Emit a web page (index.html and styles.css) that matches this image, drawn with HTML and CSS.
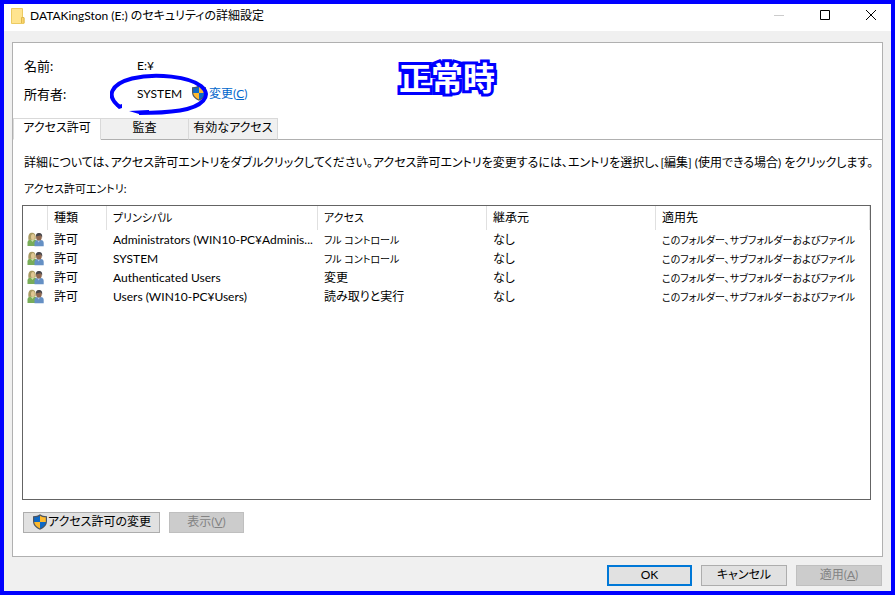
FILE: index.html
```html
<!DOCTYPE html>
<html lang="ja">
<head>
<meta charset="utf-8">
<title>DATAKingSton (E:) のセキュリティの詳細設定</title>
<link rel="stylesheet" href="styles.css">
</head>
<body>
<svg class="defs" aria-hidden="true">
  <symbol id="shield" viewBox="0 0 16 16">
    <path d="M8 .3C6.300 1.600 4 2.200 1 2.200V7c0 4.200 2.800 7 7 8.800 4.200-1.800 7-4.600 7-8.800V2.200C12 2.200 9.700 1.600 8 .3Z" fill="#4c5560"/>
    <path d="M8 1.700C6.300 2.700 4.600 3.200 2.200 3.300V8H8Z" fill="#0e69c6"/>
    <path d="M8 1.700c1.700 1 3.400 1.500 5.800 1.600V8H8Z" fill="#fdb92e"/>
    <path d="M2.200 8H8v6.500C4.700 13 2.500 11 2.200 8Z" fill="#fdb92e"/>
    <path d="M13.800 8H8v6.500c3.300-1.500 5.500-3.500 5.800-6.500Z" fill="#0e69c6"/>
  </symbol>
  <symbol id="users" viewBox="0 0 17 15">
    <path d="M.5 14V10.500C.5 8.500 2 7.500 4 7.500h3c2 0 3 1 3 3V14Z" fill="#79ad58"/>
    <path d="M3.500 7.500 5.500 10l2-2.500Z" fill="#c9dda8"/>
    <path d="M1.500 8C.8 3.500 2 .8 5 .8s4.200 2.400 3.600 6.500Z" fill="#a89a62"/>
    <ellipse cx="5.900" cy="4.900" rx="1.900" ry="2.900" fill="#dfc793"/>
    <path d="M7.500 14.300V11c0-2 1.300-3 3.200-3h3c2 0 3 1.200 3 3v3.300Z" fill="#6590c4"/>
    <path d="m10 8 1.500 2.500L13.600 8Z" fill="#a9c6e8"/>
    <ellipse cx="11.900" cy="4.900" rx="2.900" ry="3.700" fill="#8f6850"/>
    <path d="M8.900 4.500C8.800 2 10 .9 12 .9c2.200 0 3.600 1.300 3.200 4.600L13.800 3.300Z" fill="#45454b"/>
  </symbol>
</svg>
<div class="window">
  <header class="titlebar">
    <svg class="folder" viewBox="0 0 14 16" aria-hidden="true">
      <path d="M.5.500h11V9l1.500 1v5.500H.5Z" fill="#ffe48f" stroke="#eccb62"/>
      <path d="M10.500 15V9.500h2.500V15" fill="#fbd66b" stroke="#dfb84e"/>
    </svg>
    <h1>DATAKingSton (E:) のセキュリティの詳細設定</h1>
    <div class="controls">
      <button aria-label="最小化" disabled><svg viewBox="0 0 10 10"><path d="M0 5.500h10" stroke="#ccc"/></svg></button>
      <button aria-label="最大化"><svg viewBox="0 0 10 10"><path d="M.5.500h9v9h-9Z" fill="none" stroke="#000"/></svg></button>
      <button aria-label="閉じる"><svg viewBox="0 0 10 10"><path d="m0 0 10 10M10 0 0 10" stroke="#000"/></svg></button>
    </div>
  </header>
  <main class="panel">
    <dl class="info">
      <dt>名前:</dt><dd>E:¥</dd>
      <dt>所有者:</dt>
      <dd><span class="owner">SYSTEM</span><a href="#"><svg class="shield"><use href="#shield"/></svg><span>変更(<u>C</u>)</span></a>
        <svg class="ring" viewBox="0 0 98 44" aria-hidden="true"><path d="M10 34C-5 23 1 11 22 5.500 46-.5 80 4 91 13c12 10 1 21-21 24.500C57 39.500 42 40 29 40" fill="none" stroke="#00f" stroke-width="4"/><path d="m6 33 6-2v4l-3 1ZM19 38l20-1v4H29Z" fill="#00f"/></svg>
      </dd>
    </dl>
    <strong class="note">正常時</strong>
    <div class="tabs" role="tablist">
      <button role="tab" aria-selected="true">アクセス許可</button>
      <button role="tab" aria-selected="false">監査</button>
      <button role="tab" aria-selected="false">有効なアクセス</button>
    </div>
    <section class="page">
      <p>詳細については、アクセス許可エントリをダブルクリックしてください。アクセス許可エントリを変更するには、エントリを選択し、[編集] (使用できる場合) をクリックします。</p>
      <p id="entries" class="label">アクセス許可エントリ:</p>
      <div class="list">
        <table aria-labelledby="entries">
          <colgroup><col class="c-icon"><col class="c-type"><col class="c-name"><col class="c-access"><col class="c-from"><col></colgroup>
          <thead><tr><th></th><th>種類</th><th class="label">プリンシパル</th><th class="label">アクセス</th><th>継承元</th><th>適用先</th></tr></thead>
          <tbody>
            <tr><td><svg><use href="#users"/></svg></td><td>許可</td><td>Administrators (WIN10-PC¥Adminis...</td><td class="kana">フル コントロール</td><td>なし</td><td class="kana">このフォルダー、サブフォルダーおよびファイル</td></tr>
            <tr><td><svg><use href="#users"/></svg></td><td>許可</td><td>SYSTEM</td><td class="kana">フル コントロール</td><td>なし</td><td class="kana">このフォルダー、サブフォルダーおよびファイル</td></tr>
            <tr><td><svg><use href="#users"/></svg></td><td>許可</td><td>Authenticated Users</td><td>変更</td><td>なし</td><td class="kana">このフォルダー、サブフォルダーおよびファイル</td></tr>
            <tr><td><svg><use href="#users"/></svg></td><td>許可</td><td>Users (WIN10-PC¥Users)</td><td>読み取りと実行</td><td>なし</td><td class="kana">このフォルダー、サブフォルダーおよびファイル</td></tr>
          </tbody>
        </table>
      </div>
      <div class="actions">
        <button class="btn wide"><svg class="shield"><use href="#shield"/></svg>アクセス許可の変更</button>
        <button class="btn small" disabled><span>表示(<u>V</u>)</span></button>
      </div>
    </section>
  </main>
  <footer>
    <button class="btn primary">OK</button>
    <button class="btn">キャンセル</button>
    <button class="btn" disabled><span>適用(<u>A</u>)</span></button>
  </footer>
</div>
</body>
</html>
```
FILE: styles.css
```css
* { box-sizing: border-box; }
body {
  margin: 0;
  color: #000;
  font: 12px/18px Lato, "Noto Sans CJK JP", sans-serif;
  font-feature-settings: "palt";
}
button { font: inherit; font-feature-settings: inherit; color: inherit; padding: 0; }
svg { display: block; }
.defs { display: none; }
.window {
  display: flex;
  flex-direction: column;
  min-height: 100vh;
  border: 4px solid #00f;
  background: #f0f0f0;
}
.titlebar {
  display: flex;
  align-items: center;
  height: 27px;
  padding: 0 0 3px 7px;
  background: #fff;
}
.folder { width: 14px; height: 16px; margin-right: 5px; }
h1 { flex: 1; margin: 0; font-size: 12px; font-weight: 400; }
.controls { display: flex; align-self: flex-start; margin-right: -3px; }
.controls button {
  display: grid;
  place-items: center;
  width: 46px;
  height: 22px;
  border: 0;
  background: none;
}
.controls svg { width: 10px; height: 10px; }
.panel {
  position: relative;
  display: flex;
  flex: 1;
  flex-direction: column;
  margin: 11px 8px 0;
  border: 1px solid #b0b0b0;
  background: #fff;
}
.info {
  display: grid;
  grid-template-columns: 113px 1fr;
  row-gap: 10px;
  margin: 14px 11px 15px;
}
.info dt { font-size: 13px; }
.info dd { position: relative; display: flex; margin: 0; }
.owner { width: 54px; }
a { display: flex; gap: 2px; color: #0066cc; text-decoration: none; }
.shield { width: 16px; height: 16px; }
.ring { position: absolute; left: -27px; top: -12px; width: 98px; height: 44px; }
.note {
  position: absolute;
  left: 386px;
  top: 9px;
  color: #fff;
  font: 700 32px/48px "Noto Sans CJK JP", sans-serif;
  font-feature-settings: normal;
  -webkit-text-stroke: 6px #00f;
  paint-order: stroke fill;
  stroke-linejoin: round;
}
.tabs { display: flex; box-shadow: inset 0 -1px #b0b0b0; }
.tabs button {
  min-width: 88px;
  height: 22px;
  padding: 0 4px 2px;
  border: 1px solid #d9d9d9;
  border-left-width: 0;
  border-bottom-color: #b0b0b0;
  background: #f0f0f0;
  line-height: 18px;
}
.tabs button:last-child { min-width: 89px; }
.tabs button[aria-selected="true"] { background: #fff; border-bottom-color: #fff; border-left-width: 1px; }
.page { display: flex; flex: 1; flex-direction: column; padding: 14px 11px 23px 9px; }
p { margin: 0 2px 8px; white-space: nowrap; }
.list { flex: 1; border: 1px solid #646464; margin-bottom: 12px; margin-top: -1px; }
table { width: 100%; table-layout: fixed; border-collapse: separate; border-spacing: 0; }
.c-icon { width: 25px; }
.c-type { width: 59px; }
.c-name { width: 211px; }
.c-access, .c-from { width: 169px; }
th, td { padding: 0 0 0 6px; text-align: left; font-weight: 400; white-space: nowrap; }
th { height: 24px; border-right: 1px solid #e0e0e0; }
td { height: 19px; }
.label { font-size: 11px; }
.kana { font-size: 10px; }
td:first-child { padding-left: 4px; }
td svg { width: 17px; height: 15px; }
.actions { display: flex; gap: 9px; padding-left: 1px; }
.btn {
  display: flex;
  align-items: center;
  justify-content: center;
  width: 86px;
  height: 21px;
  padding-bottom: 2px;
  border: 1px solid #adadad;
  background: #e1e1e1;
}
.btn.wide { width: 137px; }
.btn.small { width: 75px; }
.btn.primary { width: 85px; border: 2px solid #0078d7; }
.btn:disabled { border-color: #bfbfbf; background: #ccc; color: #838383; }
footer { display: flex; justify-content: flex-end; gap: 9px; padding: 8px 9px 5px; }
```
